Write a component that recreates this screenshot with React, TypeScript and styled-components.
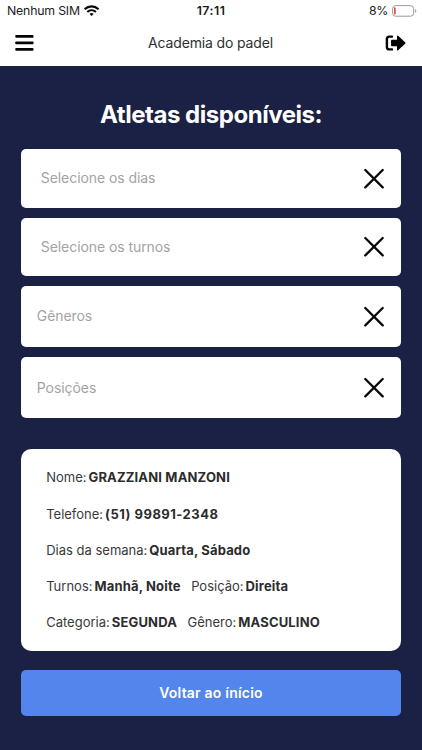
import React from 'react';
import styled, { createGlobalStyle } from 'styled-components';

const GlobalStyle = createGlobalStyle`
  * { box-sizing: border-box; }
  body { margin: 0; background: #1a2144; font-family: Inter, 'Liberation Sans', sans-serif; }
  button { font: inherit; border: 0; padding: 0; background: none; }
`;

const Screen = styled.div`
  width: 422px;
  height: 750px;
  display: flex;
  flex-direction: column;
  overflow: hidden;
  background: #1a2144;
`;

const StatusBar = styled.div`
  flex: none;
  height: 21px;
  padding: 0 5px 0 7px;
  display: grid;
  grid-template-columns: 1fr auto 1fr;
  align-items: center;
  background: #fff;
  color: #1c1c1c;
  font-size: 12.3px;
  line-height: 21px;
`;

const Carrier = styled.div`
  display: flex;
  align-items: center;
  gap: 4.5px;
  letter-spacing: -0.19px;
`;

const Clock = styled.div`
  margin-right: 2px;
  font-weight: 600;
  letter-spacing: 0.5px;
`;

const Battery = styled.div`
  display: flex;
  align-items: center;
  justify-content: flex-end;
  gap: 4px;
  letter-spacing: -0.3px;
`;

const NavBar = styled.header`
  flex: none;
  height: 45px;
  padding: 0 16px 2px 15px;
  display: grid;
  grid-template-columns: 1fr auto 1fr;
  align-items: center;
  background: #fff;
`;

const NavButton = styled.button<{ $end?: boolean }>`
  display: flex;
  justify-self: ${(p) => (p.$end ? 'end' : 'start')};
  color: #050505;
`;

const NavTitle = styled.div`
  color: #303030;
  font-size: 14px;
  line-height: 20px;
  letter-spacing: -0.15px;
`;

const Content = styled.main`
  display: flex;
  flex-direction: column;
  padding: 0 20.6px;
`;

const Heading = styled.h1`
  margin: 34px 0 19.4px;
  color: #fff;
  font-size: 24px;
  font-weight: 700;
  line-height: 30px;
  letter-spacing: -0.47px;
  text-align: center;
`;

const Filters = styled.div`
  display: flex;
  flex-direction: column;
  gap: 10px;
`;

const Field = styled.div<{ $tall?: boolean }>`
  height: ${(p) => (p.$tall ? 61.2 : 58.2)}px;
  padding: 0 16.4px 0 ${(p) => (p.$tall ? 16.2 : 20.2)}px;
  display: flex;
  align-items: center;
  justify-content: space-between;
  border-radius: 5px;
  background: #fff;
`;

const Placeholder = styled.span`
  color: #a3a3a5;
  font-size: 14px;
  line-height: 20px;
  letter-spacing: -0.07px;
`;

const ClearButton = styled.button`
  display: flex;
`;

const AthleteCard = styled.section`
  height: 202.2px;
  margin-top: 30.6px;
  padding: 18.6px 25.6px;
  border-radius: 10px;
  background: #fff;
  color: #3a3a3a;
  font-size: 13px;
  line-height: 20px;
`;

const Line = styled.div`
  display: flex;
  gap: 10.5px;
  height: 20px;
  white-space: nowrap;
  & + & { margin-top: 16.2px; }
`;

const Detail = styled.div`
  display: flex;
  gap: 2px;
`;

const Value = styled.strong<{ $numeric?: boolean }>`
  color: #2c2c2e;
  font-weight: 700;
  letter-spacing: ${(p) => (p.$numeric ? 0.48 : 0.16)}px;
`;

const BackButton = styled.button`
  && {
    height: 46px;
    margin-top: 19px;
    border-radius: 5px;
    background: #5385ec;
    color: #fff;
    font-size: 14px;
    font-weight: 600;
    line-height: 20px;
    letter-spacing: 0.2px;
  }
`;

const WifiIcon = () => (
  <svg width="16" height="12" viewBox="0 0 16 12" fill="none" stroke="#0a0a0a" strokeWidth="2.1">
    <path d="M.6 4.2C4.6 .4 10.6 .4 14.6 4.2" />
    <path d="M3.3 7C5.8 4.7 9.4 4.7 11.9 7" />
    <path d="M5.5 8.9Q7.6 7.2 9.7 8.9L7.6 11.1Z" fill="#0a0a0a" stroke="none" />
  </svg>
);

const BatteryIcon = () => (
  <svg width="25" height="12" viewBox="0 0 25 12">
    <rect x=".6" y=".6" width="21" height="10.6" rx="3" fill="#fff" stroke="#9b9b9b" />
    <rect x="2" y="2.3" width="1.7" height="7.2" rx=".8" fill="#e2483d" />
    <path d="M23.1 4v4q1.2-.6 1.2-2t-1.2-2" fill="#9b9b9b" />
  </svg>
);

const MenuIcon = () => (
  <svg width="19" height="18" viewBox="0 0 19 18" fill="currentColor">
    <rect x=".3" y="1" width="18.2" height="2.8" rx=".8" />
    <rect x=".3" y="7.5" width="18.2" height="2.8" rx=".8" />
    <rect x=".3" y="14" width="18.2" height="2.8" rx=".8" />
  </svg>
);

const ExitIcon = () => (
  <svg width="21" height="16" viewBox="0 0 21 16">
    <path d="M7 1.6H4.3Q1.9 1.6 1.9 4v8q0 2.4 2.4 2.4H7" fill="none" stroke="currentColor" strokeWidth="2.4" strokeLinecap="round" />
    <path d="M6 5.8q0-1 1-1h5V1.3q0-1.6 1.4-.4l6.7 6.3q.8.8 0 1.6l-6.7 6.3q-1.4 1.2-1.4-.4v-3.5H7q-1 0-1-1z" fill="currentColor" />
  </svg>
);

const CrossIcon = () => (
  <svg width="21" height="21" viewBox="0 0 21 21" fill="none" stroke="#080808" strokeWidth="2.3" strokeLinecap="round">
    <path d="M1.3 2l17.4 17.4M18.7 2L1.3 19.4" />
  </svg>
);

const filters = [
  { label: 'Selecione os dias' },
  { label: 'Selecione os turnos' },
  { label: 'Gêneros', tall: true },
  { label: 'Posições', tall: true },
];

const athlete = [
  [{ label: 'Nome:', value: 'GRAZZIANI MANZONI' }],
  [{ label: 'Telefone:', value: '(51) 99891-2348', numeric: true }],
  [{ label: 'Dias da semana:', value: 'Quarta, Sábado' }],
  [{ label: 'Turnos:', value: 'Manhã, Noite' }, { label: 'Posição:', value: 'Direita' }],
  [{ label: 'Categoria:', value: 'SEGUNDA' }, { label: 'Gênero:', value: 'MASCULINO' }],
] as { label: string; value: string; numeric?: boolean }[][];

export default function App() {
  return (
    <>
      <GlobalStyle />
      <Screen>
        <StatusBar>
          <Carrier>Nenhum SIM <WifiIcon /></Carrier>
          <Clock>17:11</Clock>
          <Battery>8% <BatteryIcon /></Battery>
        </StatusBar>
        <NavBar>
          <NavButton aria-label="Menu"><MenuIcon /></NavButton>
          <NavTitle>Academia do padel</NavTitle>
          <NavButton $end aria-label="Sair"><ExitIcon /></NavButton>
        </NavBar>
        <Content>
          <Heading>Atletas disponíveis:</Heading>
          <Filters>
            {filters.map((f) => (
              <Field key={f.label} $tall={f.tall}>
                <Placeholder>{f.label}</Placeholder>
                <ClearButton aria-label="Limpar"><CrossIcon /></ClearButton>
              </Field>
            ))}
          </Filters>
          <AthleteCard>
            {athlete.map((line) => (
              <Line key={line[0].label}>
                {line.map(({ label, value, numeric }) => (
                  <Detail key={label}>
                    <span>{label}</span>
                    <Value $numeric={numeric}>{value}</Value>
                  </Detail>
                ))}
              </Line>
            ))}
          </AthleteCard>
          <BackButton>Voltar ao ínício</BackButton>
        </Content>
      </Screen>
    </>
  );
}
